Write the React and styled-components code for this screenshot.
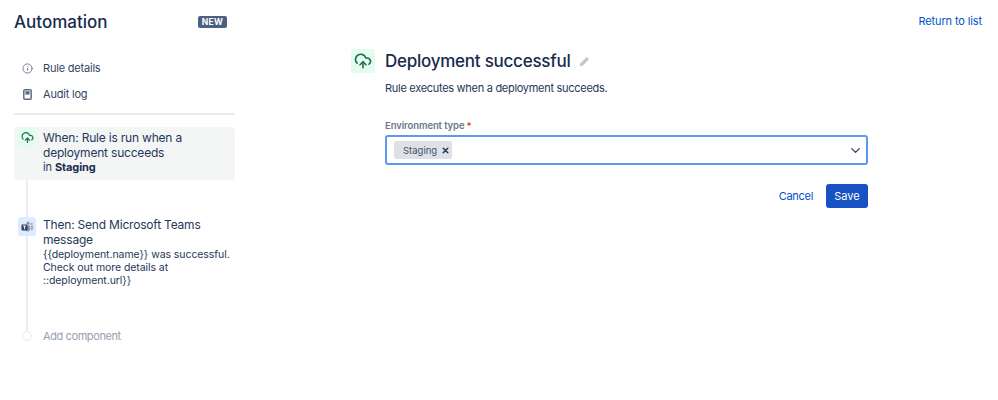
import React from "react";
import styled, { createGlobalStyle } from "styled-components";
import { Info, CloudUpload, ChevronDown } from "lucide-react";

const Global = createGlobalStyle`
  html, body { margin: 0; padding: 0; background: #fff; }
  body { font-family: Inter, "Liberation Sans", sans-serif; color: #172b4d; }
  * { box-sizing: border-box; }
`;

const Page = styled.div`
  display: flex;
  align-items: flex-start;
  width: 998px;
  height: 400px;
  padding: 0 16px 0 14px;
  overflow: hidden;
`;
const Sidebar = styled.aside`
  width: 221px;
  flex: none;
`;
const Brand = styled.div`
  display: flex;
  align-items: center;
  justify-content: space-between;
  height: 44px;
  padding-right: 8px;
`;
const BrandTitle = styled.h1`
  margin: 0;
  font-size: 17px;
  line-height: 44px;
  font-weight: 500;
  color: #172b4d;
`;
const NewBadge = styled.span`
  display: block;
  width: 29px;
  height: 12px;
  border-radius: 2px;
  background: #4c6180;
  color: #fff;
  font-size: 8.5px;
  line-height: 12px;
  font-weight: 700;
  letter-spacing: 0.3px;
  text-align: center;
`;
const Nav = styled.nav`
  display: flex;
  flex-direction: column;
  gap: 6px;
  padding-top: 14px;
  padding-bottom: 9px;
  border-bottom: 2px solid #ebecf0;
`;
const NavItem = styled.a`
  display: flex;
  align-items: center;
  height: 20px;
  padding-left: 7px;
  gap: 9px;
  font-size: 11px;
  letter-spacing: -0.2px;
  color: #344563;
`;
const NavIcon = styled.span`
  display: flex;
  align-items: center;
  justify-content: center;
  width: 13px;
  color: #5e6c84;
`;
const Steps = styled.div`
  position: relative;
  margin-top: 12px;
  &::before {
    content: "";
    position: absolute;
    left: 12px;
    top: 20px;
    height: 185px;
    width: 2px;
    background: #ebecf0;
  }
`;
const Step = styled.div`
  position: relative;
  display: flex;
  align-items: flex-start;
  gap: 7px;
  min-height: ${(p) => p.$h}px;
  margin-bottom: ${(p) => p.$mb || 0}px;
  padding-left: 4px;
  border-radius: 3px;
  background: ${(p) => (p.$active ? "#f4f5f5" : "transparent")};
`;
const StepIcon = styled.span`
  flex: none;
  display: flex;
  align-items: center;
  justify-content: center;
  width: 18px;
  height: ${(p) => p.$h}px;
  border-radius: 3px;
  background: ${(p) => p.$bg};
`;
const StepBody = styled.div`
  padding-top: ${(p) => p.$pt}px;
  padding-right: 4px;
`;
const StepTitle = styled.div`
  font-size: 12px;
  line-height: 15px;
  letter-spacing: -0.2px;
  color: #253858;
`;
const StepMeta = styled.div`
  font-size: 11px;
  line-height: 15px;
  letter-spacing: -0.1px;
  color: #253858;
  b { font-weight: 700; color: #172b4d; }
`;
const StepMessage = styled.div`
  margin-top: 1px;
  font-size: 10.5px;
  line-height: 13px;
  letter-spacing: -0.07px;
  color: #253858;
`;
const AddRow = styled.div`
  display: flex;
  align-items: center;
  gap: 7px;
  height: 20px;
  padding-left: 4px;
  position: relative;
`;
const DotSlot = styled.span`
  flex: none;
  display: flex;
  justify-content: center;
  width: 18px;
`;
const Dot = styled.span`
  width: 10px;
  height: 10px;
  border-radius: 50%;
  background: #fff;
  border: 1.5px solid #ebecf0;
`;
const AddLabel = styled.span`
  font-size: 11px;
  letter-spacing: -0.4px;
  color: #97a0af;
`;
const Main = styled.main`
  display: flex;
  gap: 10px;
  width: 517px;
  margin-left: 116px;
  padding-top: 49px;
  flex: none;
`;
const HeadIcon = styled.span`
  flex: none;
  display: flex;
  align-items: center;
  justify-content: center;
  width: 24px;
  height: 24px;
  border-radius: 3px;
  background: #e3fcef;
`;
const Form = styled.div`
  flex: 1;
`;
const TitleRow = styled.div`
  display: flex;
  align-items: center;
  gap: 9px;
  height: 24px;
`;
const Title = styled.h2`
  margin: 0;
  font-size: 17px;
  font-weight: 500;
  line-height: 24px;
  letter-spacing: -0.25px;
  color: #172b4d;
`;
const Desc = styled.p`
  margin: 8px 0 0;
  font-size: 11px;
  line-height: 15px;
  letter-spacing: -0.29px;
  color: #253858;
`;
const Label = styled.label`
  display: block;
  margin-top: 23px;
  font-size: 9.5px;
  line-height: 14px;
  font-weight: 600;
  letter-spacing: -0.1px;
  color: #6b778c;
  span { color: #de350b; margin-left: 2px; }
`;
const Select = styled.div`
  display: flex;
  align-items: center;
  justify-content: space-between;
  height: 30px;
  margin-top: 2px;
  padding: 0 3px 0 7px;
  border: 2px solid #5f96ee;
  border-radius: 3px;
  background: #fff;
`;
const Tag = styled.span`
  display: flex;
  align-items: center;
  height: 18px;
  width: 58px;
  padding-left: 9px;
  gap: 5px;
  border-radius: 2px;
  background: #dfe1e6;
  font-size: 9.5px;
  color: #42526e;
`;
const Actions = styled.div`
  display: flex;
  justify-content: flex-end;
  align-items: center;
  gap: 13px;
  margin-top: 19px;
`;
const TextButton = styled.a`
  font-size: 11px;
  letter-spacing: -0.3px;
  color: #0052cc;
`;
const PrimaryButton = styled.button`
  width: 42px;
  height: 24px;
  padding: 0;
  border: 0;
  border-radius: 3px;
  background: #1652c4;
  color: #fff;
  font-family: inherit;
  font-size: 11px;
`;
const ReturnLink = styled.a`
  margin-left: auto;
  margin-top: 14px;
  font-size: 11px;
  line-height: 15px;
  letter-spacing: -0.12px;
  color: #0052cc;
`;

const BookIcon = () => (
  <svg width="9" height="11" viewBox="0 0 9 11">
    <rect x="0.8" y="0.8" width="7.4" height="9.4" rx="1" fill="none" stroke="#5e6c84" strokeWidth="1.5" />
    <rect x="2.4" y="2.2" width="4.2" height="3.4" fill="#5e6c84" />
  </svg>
);
const TeamsIcon = () => (
  <svg width="13" height="12" viewBox="0 0 13 12">
    <circle cx="7" cy="2.2" r="1.6" fill="#8a94ab" />
    <circle cx="10.6" cy="3" r="1.2" fill="#a6aec0" />
    <path d="M5 4.6h4v4.2a2.2 2.2 0 0 1-4 .6z" fill="#8a94ab" />
    <path d="M9.6 4.8h2.6v3a1.6 1.6 0 0 1-2.6 1z" fill="#a6aec0" />
    <rect x="0.5" y="3.4" width="6" height="6" rx="0.6" fill="#344563" />
    <path d="M2 5h3M3.5 5v3.2" stroke="#fff" strokeWidth="0.9" fill="none" />
  </svg>
);
const PencilIcon = () => (
  <svg width="11" height="11" viewBox="0 0 11 11">
    <path d="M7.6.9 10 3.3 3.6 9.7.7 10.3l.6-2.9z" fill="#c1c7d0" />
  </svg>
);
const CloseIcon = () => (
  <svg width="7" height="7" viewBox="0 0 7 7">
    <path d="M1.2 1.2l4.6 4.6M5.8 1.2 1.2 5.8" stroke="#253858" strokeWidth="1.5" strokeLinecap="round" />
  </svg>
);

export default function App() {
  return (
    <>
      <Global />
      <Page>
        <Sidebar>
          <Brand>
            <BrandTitle>Automation</BrandTitle>
            <NewBadge>NEW</NewBadge>
          </Brand>
          <Nav>
            <NavItem>
              <NavIcon><Info size={11} strokeWidth={1.8} /></NavIcon>
              Rule details
            </NavItem>
            <NavItem>
              <NavIcon><BookIcon /></NavIcon>
              Audit log
            </NavItem>
          </Nav>
          <Steps>
            <Step $active $h={53} $mb={37}>
              <StepIcon $bg="#e3fcef" $h={21}>
                <CloudUpload size={13} color="#216e4e" strokeWidth={2.2} />
              </StepIcon>
              <StepBody $pt={3}>
                <StepTitle>When: Rule is run when a deployment succeeds</StepTitle>
                <StepMeta>in <b>Staging</b></StepMeta>
              </StepBody>
            </Step>
            <Step $h={73} $mb={36}>
              <StepIcon $bg="#deebff" $h={19}>
                <TeamsIcon />
              </StepIcon>
              <StepBody $pt={0}>
                <StepTitle>Then: Send Microsoft Teams message</StepTitle>
                <StepMessage>{"{{deployment.name}} was successful. Check out more details at ::deployment.url}}"}</StepMessage>
              </StepBody>
            </Step>
            <AddRow>
              <DotSlot><Dot /></DotSlot>
              <AddLabel>Add component</AddLabel>
            </AddRow>
          </Steps>
        </Sidebar>
        <Main>
          <HeadIcon>
            <CloudUpload size={18} color="#216e4e" strokeWidth={2.2} />
          </HeadIcon>
          <Form>
            <TitleRow>
              <Title>Deployment successful</Title>
              <PencilIcon />
            </TitleRow>
            <Desc>Rule executes when a deployment succeeds.</Desc>
            <Label>Environment type<span>*</span></Label>
            <Select>
              <Tag>Staging <CloseIcon /></Tag>
              <ChevronDown size={15} color="#344563" strokeWidth={2.2} />
            </Select>
            <Actions>
              <TextButton>Cancel</TextButton>
              <PrimaryButton>Save</PrimaryButton>
            </Actions>
          </Form>
        </Main>
        <ReturnLink>Return to list</ReturnLink>
      </Page>
    </>
  );
}
